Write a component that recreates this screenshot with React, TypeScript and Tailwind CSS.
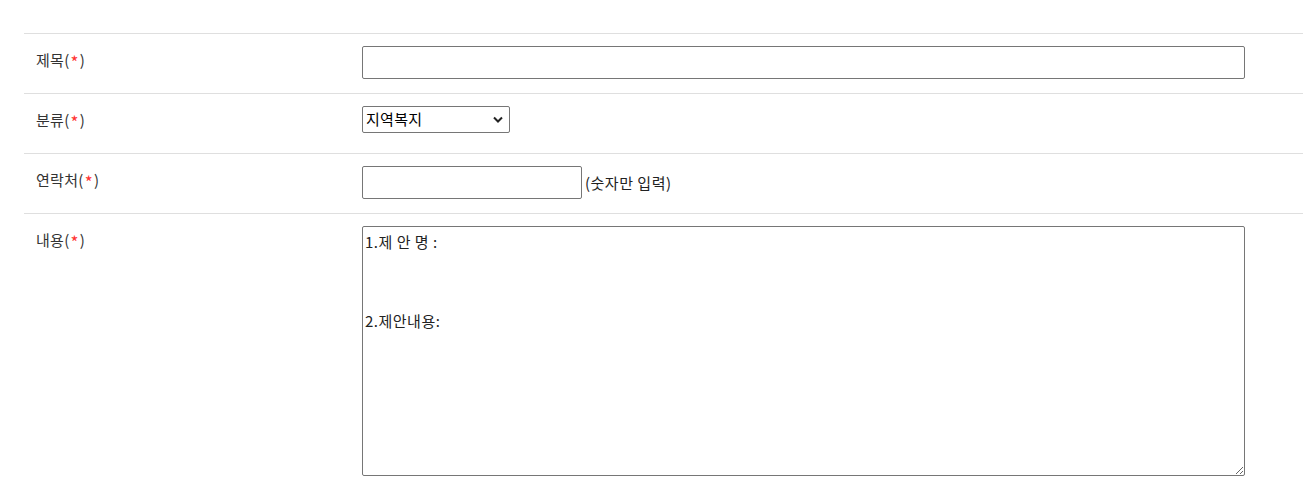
const font = { fontFamily: '"Noto Sans CJK KR", "Noto Sans", sans-serif' };

function Label({ text }: { text: string }) {
  return (
    <div className="w-[338px] shrink-0 pl-3 text-[15px] leading-[27px] tracking-[0.3px] text-[#333]">
      {text}(<span className="relative top-[3px] mx-[1px] text-[17px] leading-none text-[#f33]">*</span>)
    </div>
  );
}

export default function App() {
  return (
    <div className="bg-white min-h-screen pt-[33px] pl-6 pr-[10px]" style={font}>
      <div className="w-[1279px]">
        <div className="flex h-[60px] border-t border-[#dfdfdf] pt-3">
          <Label text="제목" />
          <input
            type="text"
            className="w-[883px] h-[33px] border border-[#767676] rounded-[2px] px-1 text-[15px] outline-none"
          />
        </div>

        <div className="flex h-[60px] border-t border-[#dfdfdf] pt-3">
          <Label text="분류" />
          <div className="relative w-[148px] h-[27px]">
            <select className="appearance-none w-full h-full border border-[#767676] rounded-[2px] pl-[3px] text-[15px] tracking-[0.3px] text-black outline-none">
              <option>지역복지</option>
              <option>교통</option>
              <option>환경</option>
            </select>
            <svg
              className="absolute right-[7px] top-[10px] pointer-events-none"
              width="10"
              height="7"
              viewBox="0 0 10 7"
            >
              <path d="M1 1.5 L5 5.5 L9 1.5" fill="none" stroke="#222" strokeWidth="2" />
            </svg>
          </div>
        </div>

        <div className="flex h-[60px] border-t border-[#dfdfdf] pt-3">
          <Label text="연락처" />
          <div className="flex items-start gap-[3px]">
            <input
              type="text"
              className="w-[220px] h-[33px] border border-[#767676] rounded-[2px] px-1 text-[15px] outline-none"
            />
            <span className="text-[15px] leading-[33px] tracking-[0.5px] text-[#222]">(숫자만 입력)</span>
          </div>
        </div>

        <div className="flex border-t border-[#dfdfdf] pt-3 pb-3">
          <Label text="내용" />
          <textarea
            className="w-[883px] h-[250px] border border-[#767676] rounded-[2px] pt-[5px] pl-[2px] text-[15px] leading-[19.7px] tracking-[0.5px] text-[#222] outline-none"
            defaultValue={"1.제 안 명 :\n\n\n\n2.제안내용:"}
          />
        </div>
      </div>
    </div>
  );
}
